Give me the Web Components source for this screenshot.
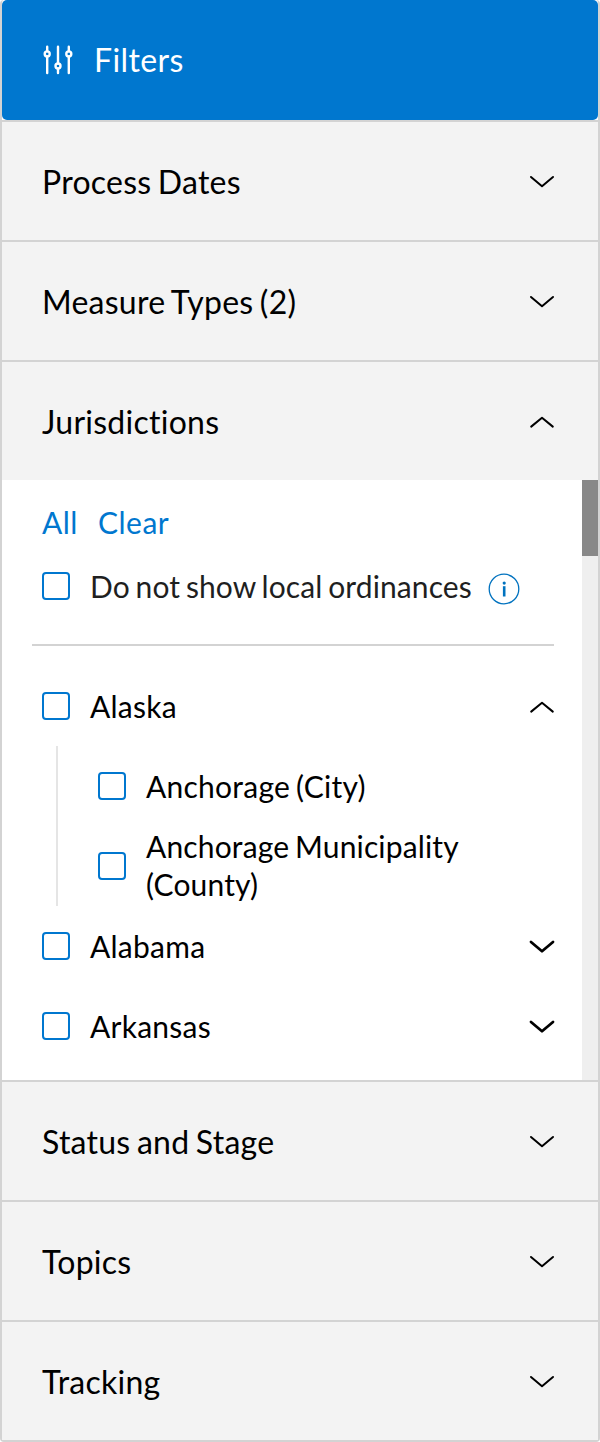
<!DOCTYPE html>
<html lang="en">
<head>
<meta charset="utf-8">
<title>Filters</title>
<style>
  body {
    margin: 0;
    background: #fff;
    color: #000;
    font-family: Lato, "Open Sans", sans-serif;
    font-variant-ligatures: none;
    letter-spacing: 0.25px;
    word-spacing: -2px;
    --blue: #0077cf;
    --line: #d3d3d3;
  }
</style>
</head>
<body>
<filter-panel heading="Filters">
  <filter-section label="Process Dates"></filter-section>
  <filter-section label="Measure Types (2)"></filter-section>
  <filter-section label="Jurisdictions" open>
    <link-bar>
      <a>All</a>
      <a>Clear</a>
    </link-bar>
    <check-row class="soft">Do not show local ordinances<info-icon slot="after"></info-icon></check-row>
    <section-rule></section-rule>
    <tree-item label="Alaska" open>
      <check-row>Anchorage (City)</check-row>
      <check-row class="tall">Anchorage Municipality (County)</check-row>
    </tree-item>
    <tree-item label="Alabama"></tree-item>
    <tree-item label="Arkansas"></tree-item>
  </filter-section>
  <filter-section label="Status and Stage"></filter-section>
  <filter-section label="Topics"></filter-section>
  <filter-section label="Tracking"></filter-section>
</filter-panel>

<script>
class FilterPanel extends HTMLElement {
  connectedCallback() {
    const area = this.attachShadow({ mode: 'open' });
    area.innerHTML = `
        <style>
          :host {
            display: block;
            box-sizing: border-box;
            height: 1442px;
            border: 2px solid var(--line);
            border-top: 0;
            border-radius: 4px;
          }

          header {
            display: flex;
            align-items: center;
            height: 120px;
            box-sizing: border-box;
            padding-left: 40px;
            gap: 20px;
            border-radius: 5px;
            background: var(--blue);
            color: #fff;
            font-size: 32px;
            letter-spacing: 0.4px;
          }

          header span {
            margin-bottom: 1px;
          }

          svg {
            display: block;
          }
        </style>
        <header>
          <svg width="32" height="32" viewBox="0 0 32 32" fill="none" stroke="#fff" stroke-width="2.4" stroke-linecap="round">
            <path d="M5.2 2.8V7.2M5.2 12.4V29M16 2.8V19.4M16 24.6V29M26.8 2.8V7.2M26.8 12.4V29"/>
            <circle cx="5.2" cy="9.9" r="2.5"/>
            <circle cx="16" cy="22" r="2.5"/>
            <circle cx="26.8" cy="9.9" r="2.5"/>
          </svg>
          <span>${this.getAttribute('heading')}</span>
        </header>
        <slot></slot>`
  }
}

class ChevronIcon extends HTMLElement {
  connectedCallback() {
    const area = this.attachShadow({ mode: 'open' });
    const d = this.hasAttribute('up') ? 'M3.2 15.6L14 6.8L24.8 15.6' : 'M3 6L14 15.2L25 6'
    area.innerHTML = `
        <style>
          :host {
            display: block;
            flex: none;
            width: 28px;
            height: 20px;
          }

          svg {
            display: block;
          }

          path {
            fill: none;
            stroke: #000;
            stroke-width: 2;
            stroke-linecap: round;
            stroke-linejoin: round;
          }

          :host([bold]) path {
            stroke-width: 2.8;
          }
        </style>
        <svg width="28" height="20" viewBox="0 0 28 20"><path d="${d}"/></svg>`
  }
}

class FilterSection extends HTMLElement {
  connectedCallback() {
    const open = this.hasAttribute('open')
    const area = this.attachShadow({ mode: 'open' });
    area.innerHTML = `
        <style>
          :host {
            display: block;
          }

          .title {
            display: flex;
            align-items: center;
            justify-content: space-between;
            height: 120px;
            box-sizing: border-box;
            padding: 0 42px 0 40px;
            border-top: 2px solid var(--line);
            background: #f3f3f3;
            font-size: 32px;
          }

          .title span {
            margin-top: 1px;
          }

          .body {
            display: flex;
            height: 600px;
            background: #fff;
            font-size: 30px;
            line-height: 38px;
          }

          .content {
            flex: 1;
            padding-right: 28px;
          }

          .track {
            width: 16px;
            background: #efefef;
          }

          .thumb {
            height: 76px;
            background: #888;
          }
        </style>
        <div class="title">
          <span>${this.getAttribute('label')}</span>
          <chevron-icon ${open ? 'up' : ''}></chevron-icon>
        </div>
        ${open ? `
        <div class="body">
          <div class="content"><slot></slot></div>
          <div class="track"><div class="thumb"></div></div>
        </div>` : ''}`
  }
}

class LinkBar extends HTMLElement {
  connectedCallback() {
    const area = this.attachShadow({ mode: 'open' });
    area.innerHTML = `
        <style>
          :host {
            display: flex;
            gap: 20px;
            padding: 23px 0 5px 40px;
            color: var(--blue);
            letter-spacing: 0.5px;
          }
        </style>
        <slot></slot>`
  }
}

class CheckRow extends HTMLElement {
  connectedCallback() {
    const area = this.attachShadow({ mode: 'open' });
    area.innerHTML = `
        <style>
          :host {
            display: flex;
            align-items: center;
            height: 80px;
            padding-left: 40px;
          }

          :host(.soft) {
            color: #1f1f1f;
            letter-spacing: 0.1px;
          }

          :host(.tall) {
            letter-spacing: 0.15px;
          }

          :host(.tall) span {
            margin-bottom: 2px;
          }

          .box {
            flex: none;
            width: 28px;
            height: 28px;
            box-sizing: border-box;
            margin-right: 20px;
            border: 2px solid var(--blue);
            border-radius: 4px;
            background: #fff;
          }
        </style>
        <div class="box"></div>
        <span><slot></slot></span>
        <slot name="after"></slot>`
  }
}

class InfoIcon extends HTMLElement {
  connectedCallback() {
    const area = this.attachShadow({ mode: 'open' });
    area.innerHTML = `
        <style>
          :host {
            display: block;
            margin: 5px 0 0 16px;
          }

          svg {
            display: block;
          }
        </style>
        <svg width="32" height="32" viewBox="0 0 32 32" fill="none" stroke="#0072bf">
          <circle cx="16" cy="16" r="14.8" stroke-width="1.3"/>
          <path d="M16.2 13.2V23.5" stroke-width="2.6"/>
          <circle cx="16.2" cy="10.1" r="1.6" fill="#0072bf" stroke="none"/>
        </svg>`
  }
}

class SectionRule extends HTMLElement {
  connectedCallback() {
    const area = this.attachShadow({ mode: 'open' });
    area.innerHTML = `
        <style>
          :host {
            display: block;
            height: 2px;
            margin: 18px 0 20px 30px;
            background: var(--line);
          }
        </style>`
  }
}

class TreeItem extends HTMLElement {
  connectedCallback() {
    const open = this.hasAttribute('open')
    const area = this.attachShadow({ mode: 'open' });
    area.innerHTML = `
        <style>
          :host {
            display: block;
          }

          .row {
            display: flex;
            align-items: center;
            justify-content: space-between;
            margin-right: -2px;
          }

          .children {
            margin-left: 54px;
            border-left: 2px solid #e5e5e5;
          }
        </style>
        <div class="row">
          <check-row>${this.getAttribute('label')}</check-row>
          <chevron-icon ${open ? 'up' : 'bold'}></chevron-icon>
        </div>
        ${open ? '<div class="children"><slot></slot></div>' : ''}`
  }
}

customElements.define("filter-panel", FilterPanel);
customElements.define("chevron-icon", ChevronIcon);
customElements.define("filter-section", FilterSection);
customElements.define("link-bar", LinkBar);
customElements.define("check-row", CheckRow);
customElements.define("info-icon", InfoIcon);
customElements.define("section-rule", SectionRule);
customElements.define("tree-item", TreeItem);
</script>
</body>
</html>
